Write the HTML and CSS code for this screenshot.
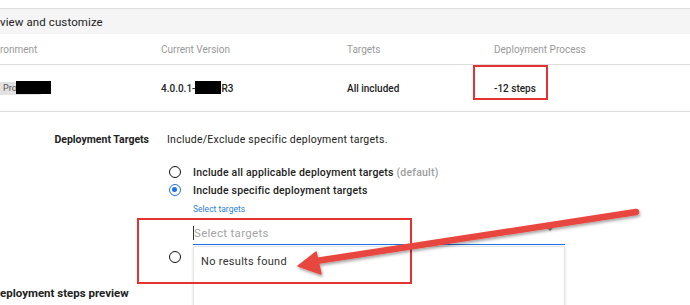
FILE: index.html
```html
<!DOCTYPE html>
<html>
<head>
<meta charset="utf-8">
<link rel="stylesheet" href="styles.css">
</head>
<body>
<div class="page">
  <div class="review-bar">view and customize</div>
  <div class="table">
    <div class="row head">
      <div class="cell">ronment</div>
      <div class="cell">Current Version</div>
      <div class="cell">Targets</div>
      <div class="cell">Deployment Process</div>
    </div>
    <div class="row body">
      <div class="cell"><span class="chip">Pro<span class="redact chip-redact"></span></span></div>
      <div class="cell version">4.0.0.1-<span class="redact ver-redact"></span>R3</div>
      <div class="cell strong">All included</div>
      <div class="cell strong process">-12 steps<span class="mark mark-steps"></span></div>
    </div>
  </div>

  <div class="targets">
    <div class="label">Deployment Targets</div>
    <div class="content">
      <div class="desc">Include/Exclude specific deployment targets.</div>
      <div class="radio-row"><span class="radio"></span><span class="radio-text">Include all applicable deployment targets <span class="muted">(default)</span></span></div>
      <div class="radio-row"><span class="radio checked"></span><span class="radio-text">Include specific deployment targets</span></div>
      <div class="sub">
        <div class="link">Select targets</div>
        <div class="select">
          <span class="cursor"></span><span class="placeholder">Select targets</span>
          <span class="caret"></span>
          <div class="menu"><div class="menu-item">No results found</div></div>
        </div>
      </div>
      <div class="radio-row third"><span class="radio"></span></div>
      <span class="mark mark-menu"></span>
    </div>
  </div>

  <div class="steps-title">eployment steps preview</div>

  <svg class="arrow" width="690" height="305" viewBox="0 0 690 305">
    <defs>
      <filter id="sh" x="-10%" y="-50%" width="120%" height="200%">
        <feDropShadow dx="1" dy="2" stdDeviation="1.5" flood-color="#000" flood-opacity="0.35"/>
      </filter>
    </defs>
    <g filter="url(#sh)">
      <line x1="636" y1="212" x2="316" y2="261" stroke="#e8473f" stroke-width="6.5" stroke-linecap="round"/>
      <polygon points="298,266 316,252 321,274" fill="#e8473f" stroke="#e8473f" stroke-width="1.5" stroke-linejoin="round"/>
    </g>
  </svg>
</div>
</body>
</html>
```

FILE: styles.css
```css
html, body {
  margin: 0;
  padding: 0;
  background: #ffffff;
}

body {
  font-family: "Roboto", "Liberation Sans", sans-serif;
  color: #333333;
  overflow: hidden;
  width: 690px;
  height: 305px;
}

.page {
  position: relative;
  padding-top: 8px;
}

.review-bar {
  border-top: 1px solid #dcdcdc;
  background: #f5f5f5;
  height: 25px;
  line-height: 26px;
  font-size: 11.5px;
  color: #222;
  letter-spacing: 0.1px;
}

.row {
  display: grid;
  grid-template-columns: 161px 186px 147px 1fr;
  border-bottom: 1px solid #dddddd;
  align-items: center;
}

.row.head {
  height: 30px;
  font-size: 10px;
  color: #9a9a9a;
}

.row.body {
  height: 46px;
  font-size: 10px;
  color: #222;
}

.cell {
  white-space: nowrap;
}

.strong {
  font-weight: 500;
}

.version {
  font-weight: 500;
  display: flex;
  align-items: center;
}

.chip {
  position: relative;
  display: inline-block;
  background: #e2e2e2;
  border-radius: 0 3px 3px 0;
  width: 42px;
  height: 13px;
  line-height: 13px;
  font-size: 9px;
  color: #555;
  padding-left: 3px;
  box-sizing: border-box;
  margin-top: 1px;
}

.redact {
  background: #000;
  display: inline-block;
}

.chip-redact {
  position: absolute;
  left: 16px;
  top: -1px;
  width: 35px;
  height: 13px;
}

.ver-redact {
  width: 26px;
  height: 13px;
  margin: 0 0 1px 0;
}

.process {
  position: relative;
}

.mark {
  position: absolute;
  border: 2px solid #e5312f;
  box-sizing: border-box;
  pointer-events: none;
}

.mark-steps {
  left: -21px;
  top: -18px;
  width: 75px;
  height: 35px;
}

.targets {
  display: grid;
  grid-template-columns: 149px 1fr;
  column-gap: 18px;
  padding-top: 21px;
}

.label {
  text-align: right;
  font-weight: 700;
  font-size: 10.5px;
  line-height: 14px;
  color: #222;
}

.content {
  position: relative;
  font-size: 10.5px;
  color: #222;
}

.desc {
  line-height: 14px;
  margin-bottom: 16px;
  letter-spacing: 0.25px;
}

.radio-row {
  display: flex;
  align-items: center;
  height: 18px;
}

.radio {
  width: 12px;
  height: 12px;
  border: 1.5px solid #111;
  border-radius: 50%;
  box-sizing: border-box;
  margin-left: 2px;
  margin-right: 12px;
  flex: none;
  position: relative;
}

.radio.checked {
  border-color: #1a73e8;
}

.radio.checked::after {
  content: "";
  position: absolute;
  left: 2px;
  top: 2px;
  width: 5px;
  height: 5px;
  border-radius: 50%;
  background: #1a73e8;
}

.radio-text {
  font-weight: 500;
  letter-spacing: 0.2px;
  white-space: nowrap;
}

.muted {
  color: #9e9e9e;
}

.sub {
  margin-left: 26px;
}

.link {
  font-size: 8.5px;
  color: #2f7fd6;
  line-height: 12px;
  margin-top: 4px;
}

.select {
  position: relative;
  width: 372px;
  height: 24px;
  margin-top: 5px;
  border-bottom: 1px solid #1a73e8;
  display: flex;
  align-items: center;
}

.cursor {
  width: 1px;
  height: 14px;
  background: #333;
  margin-top: 1px;
}

.placeholder {
  font-size: 11.5px;
  color: #a5a5a5;
  letter-spacing: 0.3px;
  margin-top: 1px;
}

.caret {
  position: absolute;
  right: 12px;
  top: 8px;
  width: 0;
  height: 0;
  border-left: 3px solid transparent;
  border-right: 3px solid transparent;
  border-top: 3px solid #888;
}

.menu {
  position: absolute;
  left: 0;
  top: 26px;
  width: 372px;
  height: 80px;
  background: #fff;
  border: 1px solid #e4e4e4;
  box-sizing: border-box;
  box-shadow: 0 1px 3px rgba(0, 0, 0, 0.12);
  z-index: 2;
}

.menu-item {
  font-size: 11px;
  color: #333;
  padding: 8px 7px;
  letter-spacing: 0.3px;
}

.radio-row.third {
  margin-top: 3px;
}

.mark-menu {
  left: -30px;
  top: 85px;
  width: 275px;
  height: 66px;
  z-index: 3;
}

.steps-title {
  font-weight: 700;
  font-size: 11.5px;
  line-height: 14px;
  margin-top: 20px;
  color: #222;
}

.arrow {
  position: absolute;
  left: 0;
  top: 0;
  z-index: 5;
  pointer-events: none;
}
```
